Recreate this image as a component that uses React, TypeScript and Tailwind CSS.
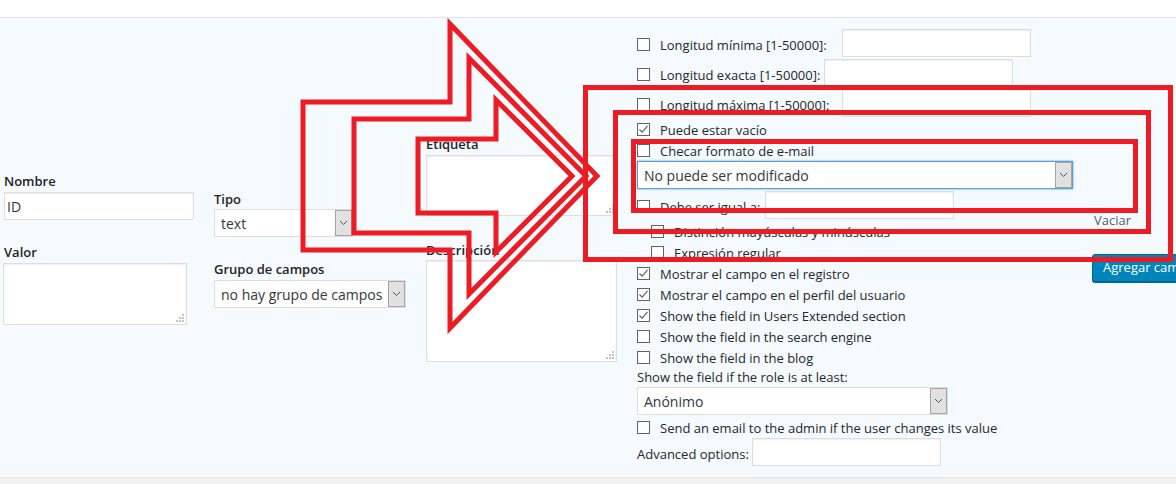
import React from "react";

const FONT = { fontFamily: '"Open Sans", "Noto Sans", "Liberation Sans", sans-serif' };

function Checkbox({ checked = false }: { checked?: boolean }) {
  return (
    <span className="flex h-[13px] w-[13px] shrink-0 items-center justify-center border border-[#5f6368] bg-white">
      {checked && (
        <svg width="11" height="11" viewBox="0 0 11 11">
          <polyline points="1.5,5.5 4.2,8.2 9.5,1.8" fill="none" stroke="#555d66" strokeWidth="1.1" />
        </svg>
      )}
    </span>
  );
}

function CheckRow({ label, checked = false, indent = false }: { label: string; checked?: boolean; indent?: boolean }) {
  return (
    <div className={`flex h-[21px] items-center gap-[10px] ${indent ? "pl-[14px]" : ""}`}>
      <Checkbox checked={checked} />
      <span className="whitespace-nowrap text-[13px] leading-[18px] text-[#23282d]">{label}</span>
    </div>
  );
}

function TextInput({ value = "", className = "" }: { value?: string; className?: string }) {
  return (
    <div
      className={`flex h-[28px] items-center border border-[#dddddd] bg-white pl-[2px] text-[14px] text-[#32373c] shadow-[inset_0_1px_2px_rgba(0,0,0,0.07)] ${className}`}
    >
      {value}
    </div>
  );
}

function Grip() {
  return (
    <svg className="absolute bottom-[2px] right-[2px]" width="8" height="8" viewBox="0 0 8 8">
      <rect x="6" y="0" width="2" height="2" fill="#c4c4c4" />
      <rect x="3" y="3" width="2" height="2" fill="#c4c4c4" />
      <rect x="6" y="3" width="2" height="2" fill="#c4c4c4" />
      <rect x="0" y="6" width="2" height="2" fill="#c4c4c4" />
      <rect x="3" y="6" width="2" height="2" fill="#c4c4c4" />
      <rect x="6" y="6" width="2" height="2" fill="#c4c4c4" />
    </svg>
  );
}

function TextArea({ className = "" }: { className?: string }) {
  return (
    <div className={`relative border border-[#dddddd] bg-white shadow-[inset_0_1px_2px_rgba(0,0,0,0.07)] ${className}`}>
      <Grip />
    </div>
  );
}

function Select({ value, className = "", focused = false }: { value: string; className?: string; focused?: boolean }) {
  return (
    <div
      className={`flex h-[28px] items-stretch border bg-white ${
        focused ? "border-[#5b9dd9] shadow-[0_0_2px_rgba(30,140,190,0.8)]" : "border-[#dddddd]"
      } ${className}`}
    >
      <span className="flex flex-1 items-center overflow-hidden whitespace-nowrap pl-[6px] text-[14px] text-[#32373c]">
        {value}
      </span>
      <span className="flex w-[17px] items-center justify-center border border-[#a5a5a5] bg-[#e1e1e1]">
        <svg width="9" height="6" viewBox="0 0 9 6">
          <polyline points="1,1 4.5,4.5 8,1" fill="none" stroke="#555555" strokeWidth="1" />
        </svg>
      </span>
    </div>
  );
}

function Label({ text }: { text: string }) {
  return <div className="whitespace-nowrap text-[13px] font-semibold leading-[18px] text-[#1d2327]">{text}</div>;
}

function Annotations() {
  return (
    <svg className="pointer-events-none absolute left-0 top-0" width="1176" height="484" viewBox="0 0 1176 484">
      <g fill="none" stroke="#ed1c24" strokeWidth="5" strokeLinejoin="miter">
        <polygon points="303,102 450,102 450,24 597,176 450,328 450,250 303,250" />
        <polygon points="354,119 469,119 469,58 586,176 469,294 469,233 354,233" />
        <polygon points="418,139 496,139 496,100 572,176 496,252 496,213 418,213" />
        <rect x="585.5" y="87.5" width="585" height="172" />
        <rect x="615.5" y="112.5" width="533" height="119" />
        <rect x="633.5" y="141.5" width="502" height="69" />
      </g>
    </svg>
  );
}

export default function App() {
  return (
    <div className="relative h-[484px] w-[1176px] overflow-hidden bg-white" style={FONT}>
      <div className="h-[18px] border-b border-[#e2e4e7] bg-white" />
      <div className="flex h-[459px] items-start bg-[#f5fafe] pl-[4px]">
        {/* Column 1 */}
        <div className="mt-[154px] flex w-[190px] flex-col">
          <Label text="Nombre" />
          <TextInput value="ID" className="mt-[2px] w-[190px]" />
          <div className="mt-[23px]">
            <Label text="Valor" />
          </div>
          <TextArea className="ml-[-1px] mt-[2px] h-[62px] w-[184px]" />
        </div>

        {/* Column 2 */}
        <div className="ml-[20px] mt-[172px] flex w-[192px] flex-col">
          <Label text="Tipo" />
          <Select value="text" className="mt-[1px] w-[139px]" />
          <div className="mt-[23px]">
            <Label text="Grupo de campos" />
          </div>
          <Select value="no hay grupo de campos" className="mt-[2px] w-[192px]" />
        </div>

        {/* Column 3 */}
        <div className="ml-[20px] mt-[117px] flex w-[191px] flex-col">
          <Label text="Etiqueta" />
          <TextArea className="mt-[2px] h-[61px] w-[191px]" />
          <div className="mt-[25px]">
            <Label text="Descripción" />
          </div>
          <TextArea className="mt-[1px] h-[102px] w-[191px]" />
        </div>

        {/* Column 4 */}
        <div className="ml-[20px] mt-[11px] flex w-[436px] flex-col">
          <div className="flex h-[28px] items-center">
            <div className="flex w-[205px] items-center gap-[10px] pt-[3px]">
              <Checkbox />
              <span className="whitespace-nowrap text-[13px] leading-[18px] text-[#23282d]">Longitud mínima [1-50000]:</span>
            </div>
            <TextInput className="w-[189px]" />
          </div>
          <div className="mt-[2px] flex h-[28px] items-center">
            <div className="flex w-[187px] items-center gap-[10px] pt-[3px]">
              <Checkbox />
              <span className="whitespace-nowrap text-[13px] leading-[18px] text-[#23282d]">Longitud exacta [1-50000]:</span>
            </div>
            <TextInput className="w-[189px]" />
          </div>
          <div className="mt-[2px] flex h-[28px] items-center">
            <div className="flex w-[205px] items-center gap-[10px] pt-[3px]">
              <Checkbox />
              <span className="whitespace-nowrap text-[13px] leading-[18px] text-[#23282d]">Longitud máxima [1-50000]:</span>
            </div>
            <TextInput className="w-[189px]" />
          </div>
          <div className="mt-[2px]">
            <CheckRow label="Puede estar vacío" checked />
          </div>
          <CheckRow label="Checar formato de e-mail" />
          <Select value="No puede ser modificado" focused className="w-[436px]" />
          <div className="mt-[2px] flex h-[28px] items-center">
            <div className="flex w-[128px] items-center gap-[10px] pt-[3px]">
              <Checkbox />
              <span className="whitespace-nowrap text-[13px] leading-[18px] text-[#23282d]">Debe ser igual a:</span>
            </div>
            <TextInput className="w-[189px]" />
          </div>
          <div className="mt-[2px]">
            <CheckRow label="Distinción mayúsculas y minúsculas" indent />
          </div>
          <CheckRow label="Expresión regular" indent />
          <CheckRow label="Mostrar el campo en el registro" checked />
          <CheckRow label="Mostrar el campo en el perfil del usuario" checked />
          <CheckRow label="Show the field in Users Extended section" checked />
          <CheckRow label="Show the field in the search engine" />
          <CheckRow label="Show the field in the blog" />
          <div className="flex h-[17px] items-center whitespace-nowrap text-[13px] leading-[18px] text-[#23282d]">
            Show the field if the role is at least:
          </div>
          <Select value="Anónimo" className="mt-[2px] w-[311px]" />
          <div className="mt-[2px]">
            <CheckRow label="Send an email to the admin if the user changes its value" />
          </div>
          <div className="flex h-[28px] items-center">
            <span className="w-[115px] whitespace-nowrap pt-[3px] text-[13px] leading-[18px] text-[#23282d]">
              Advanced options:
            </span>
            <TextInput className="w-[189px]" />
          </div>
        </div>

        {/* Column 5 */}
        <div className="ml-[19px] mt-[193px] flex shrink-0 flex-col">
          <div className="ml-[2px] whitespace-nowrap text-[13px] leading-[18px] text-[#555d66]">Vaciar</div>
          <div className="mt-[25px] flex h-[28px] w-[110px] items-center whitespace-nowrap rounded-[3px] border border-[#006799] bg-[#0085ba] pl-[10px] text-[13px] text-white shadow-[0_1px_0_#006799]">
            Agregar campo
          </div>
        </div>
      </div>
      <div className="h-[7px] border-t border-[#e2e4e7] bg-[#f1f1f1]" />
      <Annotations />
    </div>
  );
}
